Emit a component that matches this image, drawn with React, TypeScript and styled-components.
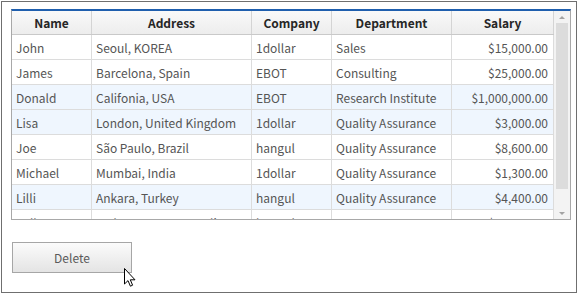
import React from "react";
import styled, { createGlobalStyle } from "styled-components";

const Global = createGlobalStyle`
  html, body { margin: 0; padding: 0; background: #fff; }
  body { font-family: "Noto Sans CJK KR", "Noto Sans", sans-serif; }
`;

const Page = styled.div`
  padding: 1px;
  width: 578px;
  height: 294px;
  box-sizing: border-box;
`;

const Frame = styled.div`
  position: relative;
  box-sizing: border-box;
  width: 576px;
  height: 292px;
  border: 1px solid #6f6f6f;
  padding: 7px 0 0 9px;
  display: flex;
  flex-direction: column;
  align-items: flex-start;
`;

const Grid = styled.div`
  box-sizing: border-box;
  width: 560px;
  height: 211px;
  border: 1px solid #a8a8a8;
  border-top: 2px solid #1f5fae;
  display: flex;
  overflow: hidden;
`;

const Body = styled.div`
  flex: 1;
  overflow: hidden;
`;

const COLS = "80px 160px 80px 120px 102px";

const HeaderRow = styled.div`
  display: grid;
  grid-template-columns: ${COLS};
  height: 24px;
  box-sizing: border-box;
  border-bottom: 1px solid #c9c9c9;
  background: linear-gradient(#f9f9f9, #ededed);
`;

const HeaderCell = styled.div`
  box-sizing: border-box;
  border-right: 1px solid #d4d4d4;
  display: flex;
  align-items: center;
  justify-content: center;
  font-size: 12px;
  font-weight: 700;
  color: #262626;
`;

const Row = styled.div<{ $hl?: boolean }>`
  display: grid;
  grid-template-columns: ${COLS};
  height: 25px;
  box-sizing: border-box;
  border-bottom: 1px solid #dcdcdc;
  background: ${(p) => (p.$hl ? "#eff6fe" : "#ffffff")};
`;

const Cell = styled.div<{ $right?: boolean }>`
  box-sizing: border-box;
  border-right: 1px solid #dcdcdc;
  display: flex;
  align-items: center;
  justify-content: ${(p) => (p.$right ? "flex-end" : "flex-start")};
  padding: 0 5px 0 4px;
  font-size: 12px;
  color: #555555;
  white-space: nowrap;
  overflow: hidden;
`;

const Scrollbar = styled.div`
  width: 16px;
  flex: none;
  background: #f3f3f3;
  display: flex;
  flex-direction: column;
  align-items: center;
`;

const Arrow = styled.div<{ $down?: boolean }>`
  height: 12px;
  flex: none;
  display: flex;
  align-items: center;
  justify-content: center;
  &::after {
    content: "";
    border-left: 3px solid transparent;
    border-right: 3px solid transparent;
    ${(p) =>
      p.$down
        ? "border-top: 3px solid #a3a3a3;"
        : "border-bottom: 3px solid #a3a3a3;"}
  }
`;

const Track = styled.div`
  flex: 1;
  width: 100%;
  box-sizing: border-box;
  padding: 0 2px;
  display: flex;
  flex-direction: column;
`;

const Thumb = styled.div`
  height: 166px;
  background: #dcdcdc;
`;

const DeleteButton = styled.button`
  margin: 22px 0 0 1px;
  width: 120px;
  height: 31px;
  box-sizing: border-box;
  border: 1px solid #a6a6a6;
  background: linear-gradient(#fbfbfb, #e4e4e4);
  font-family: "Noto Sans CJK KR", "Noto Sans", sans-serif;
  font-size: 12px;
  color: #5a5a5a;
  padding: 0;
`;

const Cursor = styled.svg`
  position: absolute;
  left: 121px;
  top: 265px;
  pointer-events: none;
`;

const columns = ["Name", "Address", "Company", "Department", "Salary"];

const rows = [
  ["John", "Seoul, KOREA", "1dollar", "Sales", "$15,000.00", false],
  ["James", "Barcelona, Spain", "EBOT", "Consulting", "$25,000.00", false],
  ["Donald", "Califonia, USA", "EBOT", "Research Institute", "$1,000,000.00", true],
  ["Lisa", "London, United Kingdom", "1dollar", "Quality Assurance", "$3,000.00", true],
  ["Joe", "São Paulo, Brazil", "hangul", "Quality Assurance", "$8,600.00", false],
  ["Michael", "Mumbai, India", "1dollar", "Quality Assurance", "$1,300.00", false],
  ["Lilli", "Ankara, Turkey", "hangul", "Quality Assurance", "$4,400.00", true],
  ["Sally", "Sydney, NSW, Australia", "hangul", "R&D", "$32,000.00", false],
] as const;

export default function App() {
  return (
    <Page>
      <Global />
      <Frame>
        <Grid>
          <Body>
            <HeaderRow>
              {columns.map((c) => (
                <HeaderCell key={c}>{c}</HeaderCell>
              ))}
            </HeaderRow>
            {rows.map((r, i) => (
              <Row key={i} $hl={r[5]}>
                <Cell>{r[0]}</Cell>
                <Cell>{r[1]}</Cell>
                <Cell>{r[2]}</Cell>
                <Cell>{r[3]}</Cell>
                <Cell $right>{r[4]}</Cell>
              </Row>
            ))}
          </Body>
          <Scrollbar>
            <Arrow />
            <Track>
              <Thumb />
            </Track>
            <Arrow $down />
          </Scrollbar>
        </Grid>
        <DeleteButton>Delete</DeleteButton>
        <Cursor width="14" height="21" viewBox="0 0 14 21">
          <path
            d="M1.5 1.5 L1.5 17 L5 13.6 L7.4 19.2 L9.6 18.2 L7.3 12.8 L12 12.8 Z"
            fill="#fff"
            stroke="#000"
            strokeWidth="1"
            strokeLinejoin="miter"
          />
        </Cursor>
      </Frame>
    </Page>
  );
}
